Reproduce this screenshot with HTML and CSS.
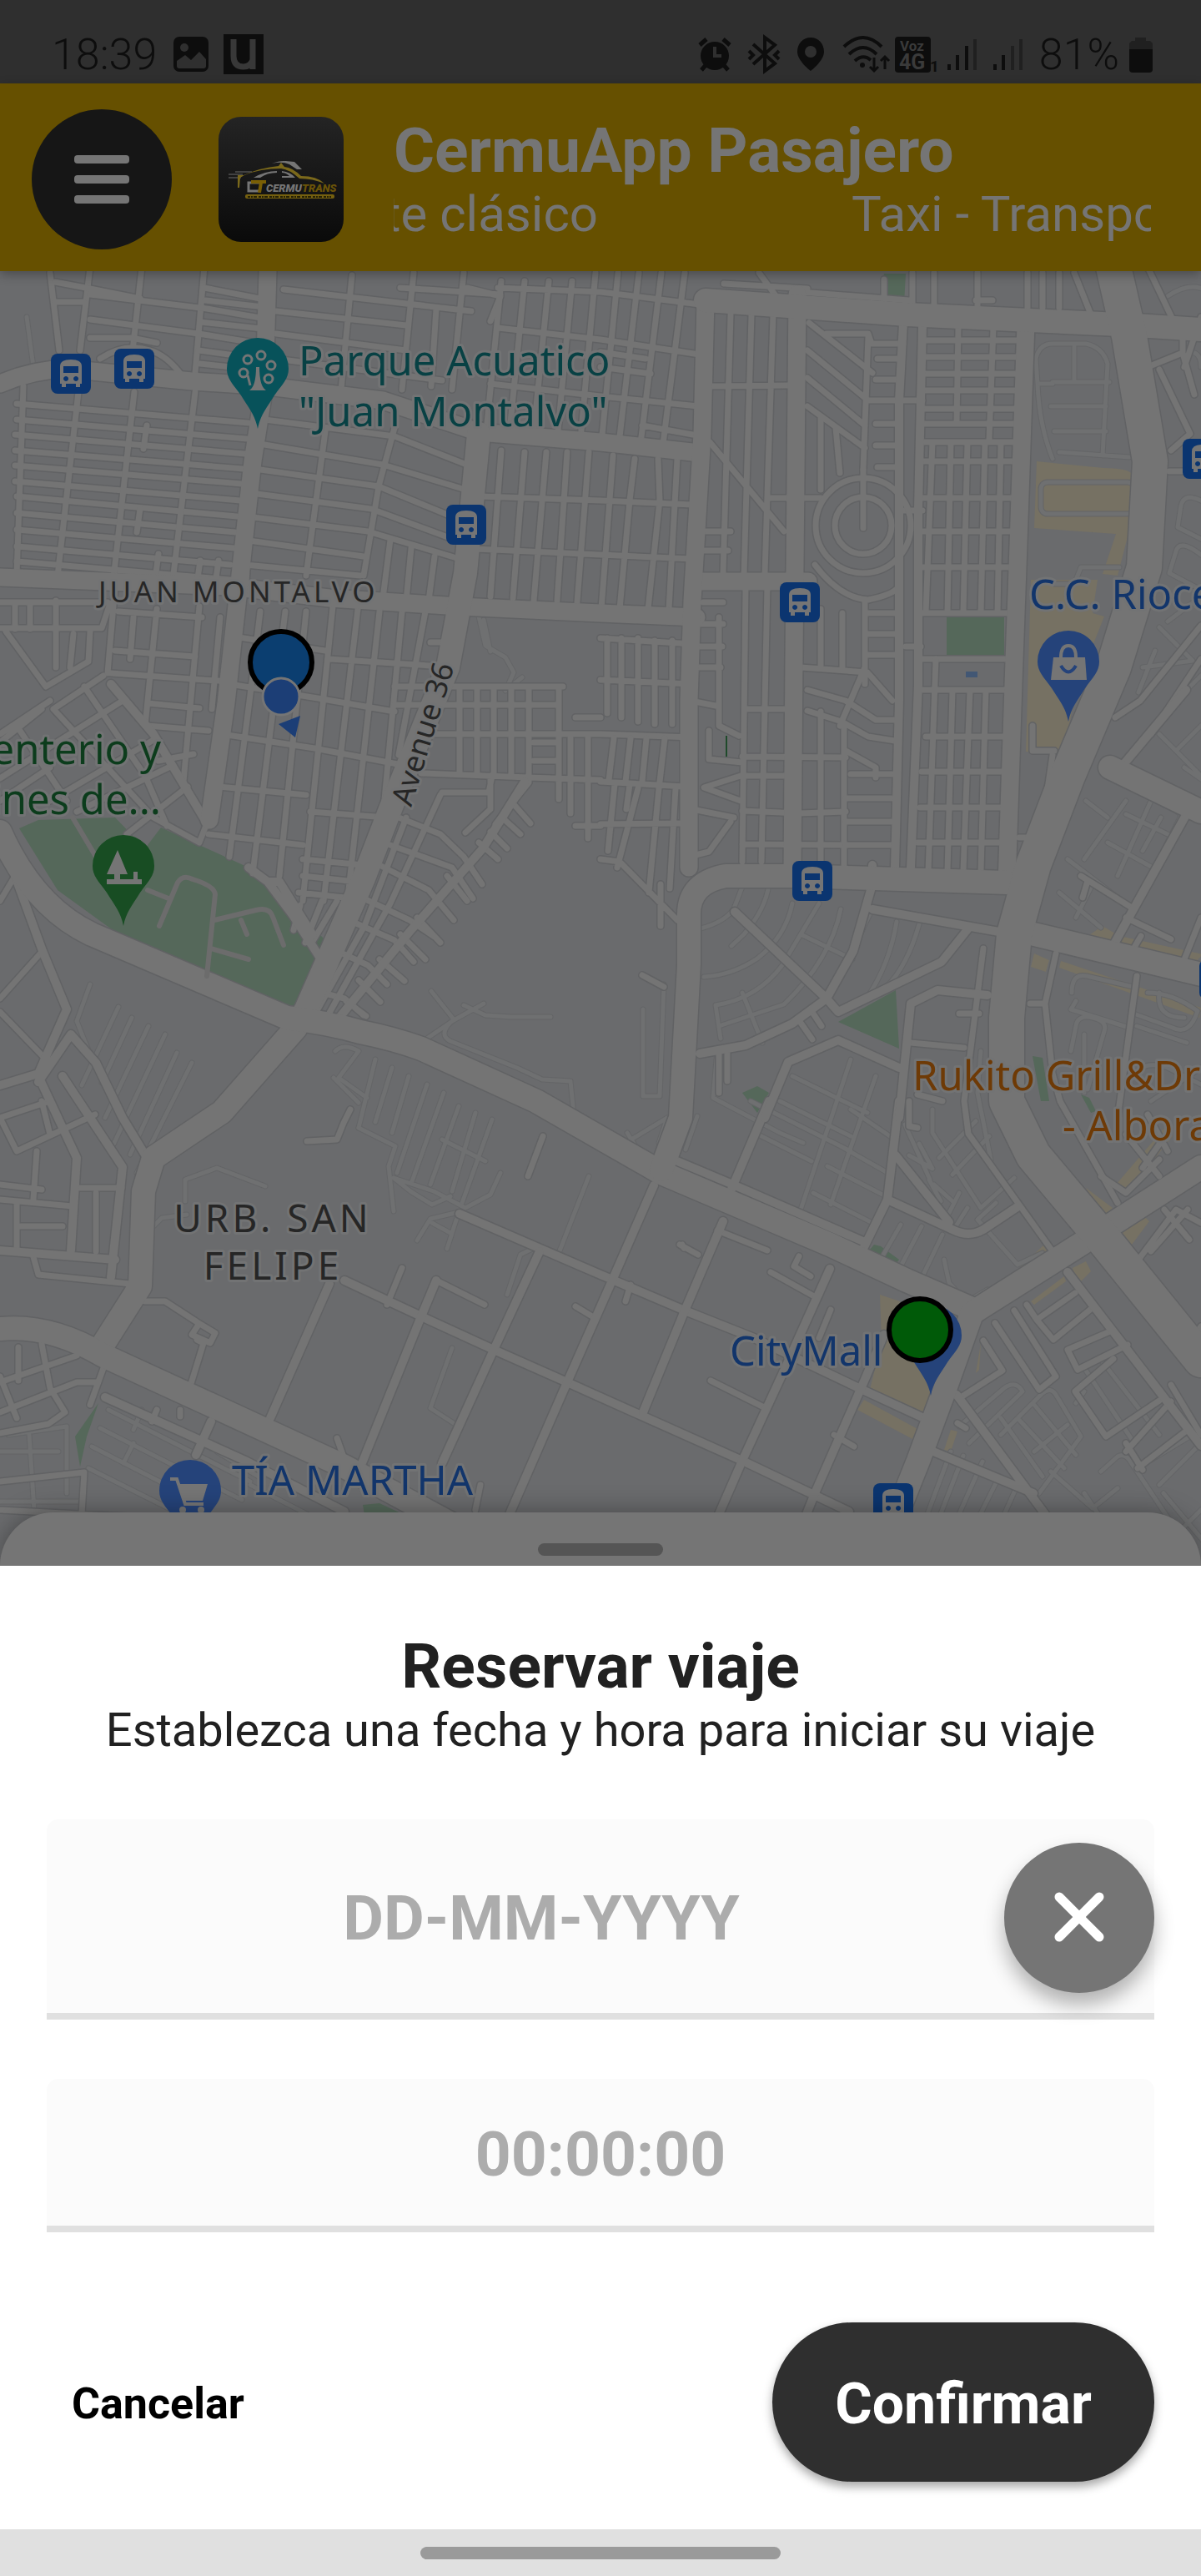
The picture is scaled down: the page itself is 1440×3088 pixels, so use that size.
FILE: index.html
```html
<!DOCTYPE html>
<html lang="es">
<head>
  <meta charset="UTF-8">
  <meta name="viewport" content="width=device-width, initial-scale=1.0">
  <title>CermuApp Pasajero</title>
  <link rel="stylesheet" href="styles.css">
</head>
<body>

<div class="status-bar">
  <div class="status-group">
    <span class="status-text">18:39</span>
    <svg class="status-picture" viewBox="0 0 42 42"><rect width="42" height="42" rx="7" fill="#0d0d0d"/><circle cx="13" cy="13" r="5" fill="#2f2f2f"/><path d="M4 29l10-7 7 6 10-10 8 9v8a3 3 0 0 1-3 3H7a3 3 0 0 1-3-3z" fill="#2f2f2f"/></svg>
    <svg class="status-u" viewBox="0 0 48 48"><rect width="48" height="48" fill="#0d0d0d"/><path d="M12 6v20q0 13 12 13 8 0 11-8M35 6v36" fill="none" stroke="#383838" stroke-width="7"/></svg>
  </div>
  <div class="status-group">
    <svg class="status-icons" viewBox="830 38 400 52">
      <g fill="#0d0d0d">
        <circle cx="853" cy="66" r="17"/>
        <path d="M844 75l-7 8M862 75l7 8M835 53l8-7M871 53l-8-7" stroke="#0d0d0d" stroke-width="5"/>
        <path d="M853 55v11h8" fill="none" stroke="#2f2f2f" stroke-width="4"/>
        <path d="M899 52l26 23-12 9V44l12 9-26 23M894 60l5 5-5 5M930 60l-5 5 5 5" fill="none" stroke="#0d0d0d" stroke-width="4"/>
        <path fill-rule="evenodd" d="M968 44c-9 0-16 7-16 17 0 11 16 23 16 23s16-12 16-23c0-10-7-17-16-17zm0 10a7 7 0 1 1 0 14 7 7 0 0 1 0-14z"/>
        <path d="M1008 55q23-22 45 0M1014 64q17-16 33 0M1021 72q10-9 19-1" fill="none" stroke="#0d0d0d" stroke-width="4"/>
        <circle cx="1030" cy="77" r="3"/>
        <path d="M1044 68v16m-5-5l5 5 5-5M1057 82V67m-5 5l5-5 5 5" fill="none" stroke="#0d0d0d" stroke-width="3"/>
        <rect x="1069" y="43" width="43" height="43" rx="4"/>
        <rect x="1132" y="76" width="4" height="7"/><rect x="1142" y="65" width="4" height="18"/><rect x="1153" y="54" width="4" height="29"/>
        <rect x="1187" y="76" width="4" height="7"/><rect x="1197" y="65" width="4" height="18"/>
      </g>
      <g fill="#202020"><rect x="1163" y="46" width="4" height="37"/><rect x="1208" y="54" width="4" height="29"/><rect x="1218" y="46" width="4" height="37"/></g>
      <text x="1075" y="60" class="volte volte-voz">Voz</text>
      <text x="1074" y="82" class="volte volte-net">4G</text>
      <text x="1111" y="85" class="volte volte-sim">1</text>
    </svg>
    <span class="status-text">81%</span>
    <svg class="status-battery" viewBox="0 0 28 43"><path d="M7 5V1h13v4h5l3 3v10H0V8l3-3z" fill="#202020"/><path d="M0 15h28v24a4 4 0 0 1-4 4H4a4 4 0 0 1-4-4z" fill="#0d0d0d"/></svg>
  </div>
</div>

<header class="app-header">
  <button class="menu-button" aria-label="Menú"><span></span><span></span><span></span></button>
  <svg class="app-logo" viewBox="0 0 150 150">
    <defs><linearGradient id="tile" x1="0" y1="0" x2="0" y2="1"><stop offset="0" stop-color="#242424"/><stop offset="1" stop-color="#0a0a0a"/></linearGradient></defs>
    <rect width="150" height="150" rx="27" fill="url(#tile)"/>
    <path d="M12 69h17M12 73h15M20 66h20" stroke="#6d6d6d" stroke-width="1"/>
    <path d="M23 85V70h7q20-9 42-11l3-4 4 5q10 1 20 11 19 0 28 9-14-6-30-6-12-11-22-12-25 0-44 8l-5 3-1 12z" fill="#7a681b"/>
    <path d="M64 56q18-7 28 2l8 5h-6l-9-6q-9-4-21-1zM80 53l11 1 9 9h-6zM42 73q14-8 28-8v2q-12 0-20 6zM76 65q10 1 16 8H76v-2h9q-4-4-9-4z" fill="#757575"/>
    <path d="M49 79H36v10h14" fill="none" stroke="#757575" stroke-width="3"/>
    <path d="M39 78h18M51 79l-2 12" stroke="#7a5f05" stroke-width="4"/>
    <text x="57" y="90" class="logo-name">CERMU<tspan class="logo-name-end">TRANS</tspan></text>
    <rect x="32" y="93" width="107" height="5" rx="2" fill="#75600f"/>
    <path d="M35 96h100" stroke="#242006" stroke-width="2" stroke-dasharray="3 1 2 1 4 2"/>
  </svg>
  <div class="app-heading">
    <h1>CermuApp Pasajero</h1>
    <div class="marquee"><span>Taxi - Transporte clásico</span><span>Taxi - Transporte clásico</span></div>
  </div>
</header>

<main class="map">
  <svg class="map-canvas" viewBox="0 325 1440 1552" preserveAspectRatio="xMidYMin slice">
    <defs>
      <g id="bus">
        <rect width="48" height="48" rx="8" fill="#0b3570"/>
        <path fill="#757575" fill-rule="evenodd" d="M11 15q0-8 13-8t13 8v21h-2v4h-5v-4H18v4h-5v-4h-2zm4 0v8h18v-8zm3 12a3 3 0 1 0 .1 0zm12 0a3 3 0 1 0 .1 0z"/>
      </g>
      <path id="pin" d="M0 72C-3 56-10 48-20 32-30 18-37 12-37 0A37 37 0 0 1 37 0C37 12 30 18 20 32 10 48 3 56 0 72z"/>

      <!-- thin alleys and parking lanes -->
      <g id="lanes">
        <path d="M32 380l8 60M1262 550q-16-40-18-90l-2-30q4-18 20-18h40q20 4 26 24l-6 110M1288 416v42M1262 458h68M1260 487h66M1264 517h62M1270 542l84 6"/>
        <rect x="1248" y="578" width="112" height="38" rx="8"/>
        <path d="M1264 700h24l8-20h46M1262 460h-16"/>
        <path d="M572 730l10 44 24 14 10 18-10 22 20-16M580 743l8 38"/>
        <path d="M108 1180l-16 44 20 50M142 1207l-44 94M158 1220l-36 78M178 1230l-52 110M198 1240l-62 132M212 1262l-56 122M230 1274l-66 132"/>
        <path d="M517 1188l27 34M580 1203l-36 20-50 34M544 1222q-20 18-4 26l80 32 30 14 34 2 6 60M582 1217l-26-12M582 1217l30 2h48"/>
        <path d="M400 1292l30 30M402 1260q10-10 28 0l-24 32 34 24M450 1270l-20 82M470 1280l-20 65M490 1290l-20 68M512 1300l-36 106M532 1310l-38 106M550 1326l-34 94M570 1334l-28 94M590 1342l-36 100"/>
        <path d="M430 1352l44 22-8 24 6 54M472 1412l48 16 38 20 30-16 12-26M472 1412l20 16 26 16 22-10M530 1366l52 26"/>
        <path d="M222 1440v-26l38-14 58 22M184 1470l10-10 30-4M500 1487l16-26 34-8-14 44M518 1466l22 12M706 1410l-36 92M640 1496l-16 8-16 48M542 1616l-26 72 34 22"/>
        <path d="M860 1260l-5 56 80 42 28 12M900 1320l120 60M1020 1270l-60 180M1050 1290l-54 154M950 1290l90 44M935 1320l85 42M905 1358l68 34M1020 1330l50 34M1008 1374l60 34M992 1398l70 36M975 1430l75 38M822 1378l14-40M750 1370l50-30-10 30M752 1358l10 16"/>
        <path d="M1080 1468l-22 38M1105 1470l-24 46M1130 1480l-22 46M1132 1510l6 28 36 40M1160 1560l24-14M1170 1566l24-14M1085 1348l30 66M1090 1385l28 16-16-30M1120 1420l22 20M1128 1440l-14-26M1138 1454l12-24M1146 1470l14-22M1194 1442l-22 20 48 54 30-14M1118 1330v28l58 90 40-36M1126 1388l44-44M1142 1408l44-46"/>
        <path d="M922 1060q-4 30-30 60l-15 14M950 1083q-8 40-42 66-30 20-64 22M982 1083l-44 74q-30 40-80 48l6 40M1008 1090q-12 60-68 114l-78 26M1046 1090q-16 30-26 60M960 1120l62 30M1075 1105q-8 50-36 92M1102 1108q-14 50-40 76M890 1190l24 60"/>
        <path d="M840 1113q30-8 40-24l10-26M796 1180l-5 134h-20v-104M1188 1390l-16-80 4-50"/>
        <path d="M1390 880l60 60M1360 930l60 50M1350 960l-50 70M1380 960l-40 90M1400 1000l-50-24M1328 1010l54 30M1300 1050l60 40M1280 1030l60 46M1270 1070l50 42M1410 900l30-30M1420 920l20 14M1370 1020l22-40M1302 960l26 20M1290 1100l18-36M1420 970l-60 120"/>
        <path d="M1285 1190q0-24 18-20l60 14M1290 1200l-6 10 70 22M1284 1260l6-30q2-14 20-10 18 4 14 16l-20 70M1376 1190q30 0 60 22-10 30-30 20l-44-16M1363 1230l60 20M1360 1290q10-20 40-10l40 20M1390 1190q-4 30 30 30M1300 1240v70M1380 1320l60-40"/>
        <path d="M1150 1710l54-46q14-10 22 4l-64 62M1200 1720l50-50q10-8 16 2l30 50-50 68M1220 1700l56 60M1240 1684l50 60M1200 1700l50 70M1240 1740l40-32M1260 1764l50 44 30-24M1320 1764l20-18q8-4 14 4l60 90M1390 1780l50-50M1380 1750l60-36M1395 1790l50 60M1300 1640l60 90M1320 1630l70 90M1300 1668l-10 14"/>
        <path d="M1140 1740l-30 80M1155 1745l-35 90M1178 1752l-40 90M1198 1770l-40 80M1220 1780l-36 80M1420 1830l20-20M1300 1790l40 60"/>
        <path d="M130 1690l170 86M120 1712l170 86M110 1734l140 72M106 1760l100 50M170 1690l-10 24M160 1730l-12 24M260 1740l50 30M10 1720l70-10v80M0 1740h70M35 1720l6 90M0 1800h100M320 1764l80 44M300 1780l70 36"/>
        <path d="M1404 430q36-20 36 10M1400 355q30-20 50-4M1440 600q-20-10-24 6l-4 26 28 14M1440 665q-26-20-30-4l-8 26 38 20M1390 752l40 40-60 8M1400 745l40-30M1385 780l-20 50M1420 830l20-20"/>
      </g>

      <!-- city streets -->
      <g id="streets">
        <path d="M20 484l278 23M20 503l276 23M18 521l276 23M18 540l274 22M18 558l272 22M18 577l270 23M20 595l264 24M20 615l262 23M20 635l260 22M20 655l256 22M20 673l256 22"/>
        <path d="M28 463l-8 227M94 470l-26 230M161 470l-26 233M234 470l-27 227M60 327l11 93M108 320l-12 100M170 320l-12 110M245 320l-11 127M176 510l-4 28M168 610l-4 28M190 664l-4 30M240 672l-4 28M262 672l-4 28"/>
        <path d="M66 362h34M108 353l140 17 70 12M108 383l130 17 74 12M108 405h50l30 6M66 338l42 8 60 12M245 345l72 14M246 360l70 8M240 386l74 8M238 420l74 10M240 436l74 8M120 430q30-20 60-10 20 6 38 30"/>
        <path d="M317 503l156 20 89 35M317 533l142 24 99 30M312 563l142 20 97 40M308 592l137 18 92 34M303 620l138 17 110 33M298 648l138 19M294 677l138 13M390 517l-23 173M473 513l-19 70-18 107M468 647l-9 70M493 657l-6 63M521 667l-7 53M303 560l-8 140M312 520l-22 180"/>
        <path d="M340 347l225 26M331 373l156 17M331 400l156 20M422 330l-13 137M496 327l-14 140M523 370l-6 93M556 327l-14 140M560 345l40 10-12 30M480 345l120 8M330 430l200 26"/>
        <path d="M601 337l-18 180M629 337l-18 180M658 337l-18 180M686 337l-18 190M714 327l-18 200M741 327l-20 205M766 327l-24 205M793 327l-25 205M821 327l-26 205M597 345l123 5 119 15M597 393l123 14 119 18M588 460l132 15 117 12M720 440l60 8M720 422l54 8M770 510l66 12"/>
        <path d="M601 540l-13 175M629 542l-14 175M655 542l-15 178M680 542l-12 178M706 542l-14 180M735 546l-14 184M761 550l-6 50-12 130M789 550l2 50-14 130M812 550l-10 180M575 595l145 5 110 5M570 658l150 7 110 5"/>
        <path d="M312 733l-12 100-25 194M342 733l-39 314M367 733l-32 317M399 727l-36 353M429 730l-41 350M455 733l-37 334M482 733l-23 247M510 733l-32 172M280 763l110 17M395 790l151 10M275 820l106 17 92 16M266 880l111 17 105 20M262 943l105 10M372 973l92 7M250 1000l113 13M363 1030l73 7M363 1050l64 7M358 1070l65 7M516 770h32"/>
        <path d="M138 703l-9 104M188 730l-14 140M239 727l-19 210M264 740l-10 110M142 733l100 7M138 780l96 7M133 807l142 10M177 843l62 6M177 870l73 6M160 740l-4 50M0 722h129M0 753h122l10-30M7 757l48 66 51-30 2-36M67 720v80M18 724v30M36 724v30M88 760l-4 40"/>
        <path d="M64 850l120 130 55 30 9-23M101 823l73 107 26 60M0 933l147-93M60 960l124-73M92 973l110-53M152 1000l73-57M0 880l60-40M20 870l60 90M50 850l-50 40M64 850l60-40M0 960l60-40M190 912l42-8"/>
        <path d="M478 980l50 20 28 27 22 33M468 1013l74 27 25 37M455 1037l59 30 30 36M436 1077l55 26 30 20M418 1103l55 24 23 26M404 1140l37 17 23 23M386 1190l27 7 23 20M615 963l21 24M602 980l22 20M588 997l20 20M574 1010l23 20M536 1050l24 30M500 1100l28 30M480 1120l30 30M455 1150l30 26M430 1175l26 26M415 1200l24 18"/>
        <path d="M487 980l-50 130-60 107M528 953l-60 130-78 140M360 1085l-8 30M386 1080l-20 50M404 1080l-30 50M412 1090l-50 130"/>
        <path d="M473 823h202M473 845h197M514 880h206l110 4M505 927l129 5 86 3M551 823v105M572 823v106M592 823v107M613 823v108M634 823v115l-40 50M670 823v135M640 890h30M640 912h30M684 885v90M705 885v120M530 950h56l4-20M588 930v40l-30 28M690 860h30M690 990h30"/>
        <path d="M720 765l110 7M720 815l108 5M728 765v90M745 765v95M765 765v100M785 768v100M806 768v100M736 885l-6 50M756 885l-6 52M775 885l-5 52M797 885l-6 52M720 937l102 6M737 940l-8 80M755 940l-4 30M765 945l-25 95M790 945l-12 125M810 945l-7 120M720 988l102-1M720 1030l23 3 69 70M792 1060v50"/>
        <path d="M876 377l-9 310M901 377l-9 313M927 377l-10 310M894 703l-4 330M862 740v130l24 12M920 703l-7 330M851 530l89 107M853 463l92-1M846 637h30M843 660h30M843 722h24M832 748h35M832 775h34M838 800h26M894 850h50M890 907l124 1M890 930h50M890 972l69 3 55-2M890 1012l124 1M920 597h35M828 840l30 6M830 970l50 10M850 876v34l40 4M888 930l-44 14 44 16M876 985l-26 36-16 4"/>
        <path d="M1041 403l-6 160M970 387l76 60M968 420l73 60M968 453l69 57M968 487l69 50M991 400h50l4 12h38M984 500v87M1002 513l5 54M1052 430h28M1050 455h28M1041 480h65M1050 508h26M1050 534h26M1052 560h24M958 597h26M1083 612h23M1086 775h18M868 340l100 6M910 327l22 30M960 350l130 10M1094 327v40M1120 327v40M1172 327v42M1190 360h-20M1232 327v42M1250 327v42M1270 327v42M1288 327l20 50M1060 335v30"/>
        <circle cx="1035" cy="630" r="57"/><circle cx="1035" cy="630" r="34"/><path d="M1035 563v70"/>
        <path d="M977 677q30 40 64 42 30-6 37-16M1037 720v100M984 730v70M1010 735v65M1041 735h37M1041 760h37M1041 785h37M960 800l80 6 30 34M1037 800l-30 70M968 827l46 13 36 23h28M968 852l41 13 32 18 32 5M1014 900l36 20v12M984 853v180M1012 870v170"/>
        <path d="M1149 393l-2 114M1191 393l-5 134M1106 408h118M1106 428h118M1106 448h118M1106 468h118M1106 490h118M1106 508h118M1106 530h118M1106 553h118M1106 597h116M1106 637h116M1106 680h116M1106 735h116M1106 790h116M1118 530l-8 205M1140 530l-4 205M1160 530l-5 205M1181 530l-5 205M1200 530l-4 205"/>
        <path d="M1105 827h102M1110 883h98M1105 925h98M1103 968h98M1100 1010h105M1122 790l-9 255M1142 827l-6 218M1163 827l-8 218M1182 827l-6 218M1020 928h50M1014 957h55M1014 985h55M1014 1013h55"/>
        <path d="M1376 320l32 67M1376 440l42-17 14 50M1390 443l37 77-23 20M1418 390v34M1440 380l-20 60M1402 565h20M1440 750l-73 90-30 20M1440 790l-60 90M1238 870v30h26M1262 905l-16 110M1222 1004h24"/>
        <path d="M796 1183l-26-14M1179 1137l-23 183 5 39 101 141M1092 1250l64 6M1150 1215h24M1266 1143l-13 60 9 84 9 33 69 122M1235 1203h18M1363 1170l-23 170M1296 1050l64 40M1304 1056l-6 20M1350 1100l54 26M1440 1100l-20 50M1368 1122l-14 24"/>
        <path d="M960 1226l14 20M975 1215l10 15M862 1260v50M872 1260v36"/>
        <path d="M0 1213l55 57M51 1140L0 1197M18 1050L0 1080M0 1420l50 6M39 1503l7 25 110 11M0 1438l87 8M96 1424h50M20 1440v60M44 1380l-4 58M0 1340l60-20M0 1340l20 40 94-44M50 1320l10 40M115 1430v70M25 1470h50M22 1615v40M50 1611l10 53 18 29-20 14-58 11M0 1657l92-32M0 1693l92-36h24M124 1640l-16 44M0 1650l20 50M0 1776l101-11-3 50M0 1810l190 10M174 1560h24l40 26 20 12-6 12-22-10 8-12M236 1606l8 4-16 52M188 1690l-6 14M216 1690v8M404 1724l12 34M576 1780l-6 30"/>
        <path d="M420 1330l-8 16-8 20-36 2M651 1362l-18 48M523 1535l58 29M482 1520l-18 44M690 1566l20 12M820 1496l-2-4M815 1492l22 12M860 1475l60 24M958 1506l-6 12 20 12M924 1525l54 30M750 1560l6-20M852 1655l64 32M1000 1720l24 14M996 1570l-14 34M1148 1706l10 6"/>
        <path d="M1216 1571l50 79-20 16-53-80M1289 1550l-46 32 20 24 44-36M1243 1582l-12-18M1179 1607l23 36-50 32M1331 1596l-51 22 12 24 60-30M1335 1629l-46 39 37 54 64-43M1350 1740l54-60M1364 1760l60-46M1350 1730l20 32M1420 1620l20-30M1404 1660l36 60M1350 1530l60-80 30 16M1380 1500l44-50M1396 1450l30 36M1320 1410l30 20 40-40M1350 1360l40 50M1370 1400l24-34M1400 1380l-24-44"/>
        <path d="M1130 1320l-30-8M1090 1320v30l10 2"/>
      </g>

      <!-- secondary roads -->
      <g id="roads">
        <path d="M1083 387l-5 93v360l-5 200M1106 390l-5 220v210l-9 220"/>
        <path d="M133 820l51 60 64 107M321 1057l30 40 32 50M298 1040l23 17h14l40 64"/>
        <path d="M629 937l-50 80-88 100-90 110"/>
        <path d="M18 1050l33 90 29 70-34 77-46 14M46 1297l39-57 30 34 32 66 28 46M46 1290l46 98-7 111M75 1290l72 109-14 132M0 1499l138 11"/>
        <path d="M413 1535l92 43 87 40 88 39 40 18 170 76 128 61M551 1455l169 73 101 43 83 33 128 61 78 36"/>
        <path d="M395 1539l-71 161M523 1535l-18 43-71 176M647 1500l-55 118-62 136M784 1421l-50 114-54 122-69 158M867 1464l-46 107-50 122M995 1521l-55 122-50 108-28 64M1060 1600l-28 65-55 125-10 25"/>
        <path d="M812 1392l69 29 156 68M922 1320l-46 108M1078 1320l-14 118-32 65M1064 1438l78 36q20 10 37 0l42-28M1074 1385l64 80"/>
        <path d="M839 1263l55-10 56-26 41-30 32-57 23-80v-23M1046 1090l152 27M1161 1113l-32 40-124 60-14-16-110-104M917 1340l28-67 60-26 73 33M1078 1340l14-137 32-16 60 6"/>
        <path d="M1147 1672l106 143M1280 1525l160 208M1119 1740l120 50M1422 977l-87 156M1422 827l-78 93M126 1675l168 76 119 61M253 1704l-18 40"/>
      </g>

      <!-- avenues -->
      <g id="avenues">
        <path d="M0 460q40-17 80-18l150 15 91 6 138 17 115 38 146 12 119 13"/>
        <path d="M0 692l275 11 120 14 156 10 169 8 115 5M839 697h130"/>
        <path d="M846 360l-4 160-12 200-4 120v200M317 463l-14 90-32 290-20 140M956 353l-4 434-2 260"/>
        <path d="M1230 387l-9 266-6 167-8 240M321 325l-4 140"/>
      </g>
      <g id="highways">
        <path d="M574 520l-16 167-21 113-69 170-32 83-69 157-13 23-88 100-82 55-12 40-4 114-44 69"/>
        <path d="M0 997q40 90 110 123l234 100q50 6 88 17 40 8 73 20l138 63 150 86 202 86 92 43 83 36"/>
        <path d="M0 1593q60-6 124 32l133 61 156 72 130 70M1170 1571l147-93 123-79M1165 1575l-32 90-32 86-24 60"/>
        <path d="M846 360l241 17 276 13 77 5M950 1050l257 8M950 1050H870q-44 8-44 46v60l-10 184-23 62M1240 1120l200 48M1331 920l109 53"/>
      </g>
      <path id="motorway" d="M1335 320l19 83 25 150-7 127-37 120-55 130-41 107-23 83-9 100v100l32 65 78 93 123 152"/>
    </defs>

    <rect y="325" width="1440" height="1552" fill="#6a6b6d"/>

    <g fill="#55685a">
      <path d="M23 993l23-10 92-3 36 37 19-25 46 21 59 27 23 17 69 70-36 86-216-96-69-50z"/>
      <path d="M1060 328h26l-2 36-30-2zM1135 738h69v47h-69zM1074 1187l-69 38 73 32zM890 1310l18-8 14 8-14 24zM1048 1492l8 2 22 16-6 8-34-14zM1238 1266l12 2 8 52h-10zM1296 1312l10 4 8 16-6 2zM118 1682l-14 40-8 36-6-36zM435 1804l20-2 30 14h-48z"/>
    </g>
    <g fill="#767163">
      <path d="M1243 553l80 8q34 0 36 10l-1 49-18 70-18-2 16-48-98-7zM1236 695h80l-6 40 14 4-34 86-14 78-46-2z"/>
      <path d="M1252 1108l48 17 22-15 20 12 100 22-14 16-176-50zM1240 1143l18 8-4 14-18-6zM1272 1152l168 56-2 12-168-60z"/>
      <path d="M1055 1552l24 8-4 40 50 20-14 86-70-32 16-66zM1036 1678l66 36-6 12-68-36zM1078 1520l64 26-4 8-60-26zM1310 1430l24 18-12 12-20-36zM1338 1420l60-70 8 12-56 70zM1338 1484l34-26 6 6-24 32-12-4zM1212 1530l40-38 6 12-44 28zM1270 1500l10-12 8 6-10 14zM1176 1610l-6 36 4-4zM1286 1520l16-8 6 12-16 16zM1236 1560l40-30 2 6-38 28zM1140 1714l8 2-8 24-8-2z"/>
    </g>
    <rect x="1158" y="805" width="14" height="7" fill="#425774"/>
    <path d="M871 882v26" stroke="#1f4a2b" stroke-width="2"/>

    <g class="roads lane-lines"><use href="#lanes" class="casing"/><use href="#lanes" class="fill"/></g>
    <g class="roads">
      <use href="#streets" class="casing street-casing"/>
      <use href="#roads" class="casing road-casing"/>
      <use href="#avenues" class="casing avenue-casing"/>
      <use href="#highways" class="casing highway-casing"/>
      <use href="#motorway" class="casing motorway-casing"/>
      <use href="#streets" class="fill street"/>
      <use href="#roads" class="fill road"/>
      <use href="#avenues" class="fill avenue"/>
      <use href="#highways" class="fill highway"/>
      <use href="#motorway" class="fill motorway"/>
    </g>
    <g class="park-path">
      <path d="M87 980l28 47M177 1067l25 10M191 1110l22-52q6-10 18-4 26 8 27 18l-10 98M257 1103l50-12q16-4 20 8l13 34M289 1103l7 17M253 1137l45 13"/>
    </g>

    <use href="#bus" x="61" y="424"/><use href="#bus" x="137" y="418"/><use href="#bus" x="535" y="605"/>
    <use href="#bus" x="935" y="698"/><use href="#bus" x="1418" y="526"/><use href="#bus" x="950" y="1032"/>
    <use href="#bus" x="1438" y="1150"/><use href="#bus" x="1047" y="1778"/>

    <g transform="translate(309 442)">
      <use href="#pin" fill="#07525a"/>
      <path d="M-10 26q8-5 8-28h4q0 23 8 28z" fill="#757575"/>
      <g fill="none" stroke="#757575" stroke-width="3"><circle cx="-17" cy="5" r="5"/><circle cx="-12" cy="-11" r="5"/><circle cx="4" cy="-16" r="5"/><circle cx="16" cy="-4" r="5"/><circle cx="13" cy="12" r="5"/><path d="M-12 8l3 12"/></g>
    </g>
    <g transform="translate(148 1038)">
      <use href="#pin" fill="#184d23"/>
      <path d="M-7-19L-20 10h9v6h-9v6h42v-6h-5V7h-5v9H-4v-6h9z" fill="#757575"/>
    </g>
    <g transform="translate(1281 793)">
      <use href="#pin" fill="#25437a"/>
      <path d="M-18-5h38l2 27h-43z" fill="#757575"/>
      <path d="M-9-5q0-14 9-14t9 14" fill="none" stroke="#757575" stroke-width="4"/>
      <path d="M-9 5q9 15 18 0" fill="none" stroke="#25437a" stroke-width="4"/>
    </g>
    <use href="#pin" x="1116" y="1601" fill="#25437a"/>
    <g transform="translate(228 1787)">
      <use href="#pin" fill="#25437a"/>
      <path d="M-24-14h8l10 30h22" fill="none" stroke="#757575" stroke-width="4"/>
      <path d="M-14-8h35l-6 20H-8z" fill="#757575"/><circle cx="-9" cy="23" r="4" fill="#757575"/><circle cx="13" cy="23" r="4" fill="#757575"/>
    </g>

    <!-- trip origin, current position, destination -->
    <circle cx="337" cy="794" r="37" fill="#0b3e70" stroke="#000" stroke-width="6"/>
    <circle cx="337" cy="835" r="22" fill="#1c3e76" stroke="#757575" stroke-width="3"/>
    <path d="M334 868l26-10-6 26z" fill="#1c3e76"/>
    <circle cx="1103" cy="1594" r="37" fill="#005a08" stroke="#000" stroke-width="6"/>

    <g class="label">
      <text x="358" y="450" fill="#084144">Parque Acuatico</text>
      <text x="358" y="511" fill="#084144">"Juan Montalvo"</text>
      <text x="193" y="916" class="end" fill="#0c3c1c">Cementerio y</text>
      <text x="193" y="976" class="end" fill="#0c3c1c">Jardines de...</text>
      <text x="1234" y="730" fill="#12356b">C.C. Riocentro</text>
      <text x="1094" y="1307" fill="#6e3a06">Rukito Grill&amp;Drinks</text>
      <text x="1274" y="1367" fill="#6e3a06">- Alborada</text>
      <text x="875" y="1637" fill="#12356b">CityMall</text>
      <text x="278" y="1792" fill="#12356b">TÍA MARTHA</text>
      <text x="118" y="722" class="district small">JUAN MONTALVO</text>
      <text x="327" y="1477" class="district middle">URB. SAN</text>
      <text x="327" y="1534" class="district middle">FELIPE</text>
      <text class="street-name" transform="translate(493 968) rotate(-73)">Avenue 36</text>
    </g>
  </svg>
  <div class="trip-sheet"><span class="sheet-handle"></span></div>
</main>

<form class="booking">
  <h2>Reservar viaje</h2>
  <p>Establezca una fecha y hora para iniciar su viaje</p>
  <div class="field date-field">
    <input type="text" placeholder="DD-MM-YYYY" aria-label="Fecha">
    <button type="button" class="clear-button" aria-label="Borrar fecha">
      <svg viewBox="0 0 60 60"><path d="M6 6l48 48M54 6L6 54" fill="none" stroke="#fff" stroke-width="11" stroke-linecap="round"/></svg>
    </button>
  </div>
  <div class="field time-field">
    <input type="text" placeholder="00:00:00" aria-label="Hora">
  </div>
  <div class="actions">
    <button type="button" class="cancel-button">Cancelar</button>
    <button type="button" class="confirm-button">Confirmar</button>
  </div>
</form>

<div class="gesture-bar"><span></span></div>

</body>
</html>
```
FILE: styles.css
```css
* {
  box-sizing: border-box;
}
body {
  margin: 0;
  min-height: 100vh;
  display: flex;
  flex-direction: column;
  font-family: Roboto, sans-serif;
  background-color: #fff;
  color: #212121;
}
button {
  border: none;
  padding: 0;
  font-family: inherit;
  cursor: pointer;
}
.status-bar {
  height: 100px;
  padding: 30px 58px 0 62px;
  display: flex;
  justify-content: space-between;
  background-color: #2f2f2f;
  color: #0d0d0d;
}
.status-group {
  height: 70px;
  display: flex;
  align-items: center;
}
.status-text {
  font-size: 52px;
  font-weight: 300;
}
.status-picture {
  width: 42px;
  height: 42px;
  margin: 0 18px 0 20px;
}
.status-u {
  width: 48px;
  height: 48px;
}
.status-icons {
  width: 400px;
  height: 52px;
  margin-right: 12px;
}
.status-battery {
  width: 28px;
  height: 43px;
  margin-left: 12px;
}
.volte {
  font-weight: 700;
  fill: #3a3a3a;
}
.volte-voz {
  font-size: 17px;
}
.volte-net {
  font-size: 25px;
}
.volte-sim {
  font-size: 19px;
  fill: #0d0d0d;
}
.app-header {
  height: 225px;
  padding: 4px 60px 0 38px;
  display: flex;
  align-items: center;
  background-color: #665000;
  color: #757575;
  position: relative;
  z-index: 1;
  box-shadow: 0 4px 12px rgba(0, 0, 0, 0.3);
}
.menu-button {
  width: 168px;
  height: 168px;
  flex: none;
  border-radius: 50%;
  background-color: #161616;
  display: flex;
  flex-direction: column;
  align-items: center;
  justify-content: center;
  gap: 14px;
}
.menu-button span {
  width: 66px;
  height: 10px;
  border-radius: 4px;
  background-color: #757575;
}
.app-logo {
  width: 150px;
  height: 150px;
  flex: none;
  margin: 0 60px 0 56px;
}
.logo-name {
  font-size: 13px;
  font-weight: 900;
  font-style: italic;
  fill: #757575;
}
.logo-name-end {
  fill: #6b5408;
}
.app-heading {
  flex: 1;
  min-width: 0;
}
.app-heading h1 {
  margin: 0;
  font-size: 75px;
  line-height: 84px;
  font-weight: 700;
}
.marquee {
  display: flex;
  gap: 304px;
  overflow: hidden;
  white-space: nowrap;
  font-size: 60px;
  line-height: 70px;
}
.marquee span:first-child {
  margin-left: -405px;
}
.map {
  flex: 1;
  min-height: 600px;
  position: relative;
  overflow: hidden;
}
.map-canvas {
  position: absolute;
  width: 100%;
  height: 100%;
}
.roads use,
.park-path {
  fill: none;
  stroke-linecap: round;
  stroke-linejoin: round;
}
.casing {
  stroke: #616264;
}
.fill {
  stroke: #747474;
}
.lane-lines .casing {
  stroke: #646567;
  stroke-width: 7px;
}
.lane-lines .fill {
  stroke: #6f7071;
  stroke-width: 5px;
}
.street-casing { stroke-width: 10px; }
.street { stroke-width: 7px; }
.road-casing { stroke-width: 13px; }
.road { stroke-width: 10px; }
.avenue-casing { stroke-width: 24px; }
.avenue { stroke-width: 21px; }
.highway-casing { stroke-width: 31px; }
.highway { stroke-width: 28px; }
.motorway-casing { stroke-width: 45px; }
.motorway { stroke-width: 42px; }
.park-path {
  stroke: #6c6c6c;
  stroke-width: 6px;
}
.label {
  font-family: "Noto Sans", sans-serif;
  font-size: 49px;
  paint-order: stroke;
  stroke: #727374;
  stroke-width: 6px;
  stroke-linejoin: round;
}
.label .end {
  text-anchor: end;
}
.label .middle {
  text-anchor: middle;
}
.district {
  fill: #262626;
  font-size: 46px;
  letter-spacing: 4px;
}
.district.small {
  font-size: 35px;
}
.street-name {
  fill: #262626;
  font-size: 36px;
}
.trip-sheet {
  position: absolute;
  left: 0;
  right: 0;
  bottom: 0;
  height: 64px;
  padding-top: 37px;
  border-radius: 64px 64px 0 0;
  background-color: #757575;
  box-shadow: 0 0 30px rgba(0, 0, 0, 0.35);
}
.sheet-handle {
  display: block;
  width: 150px;
  height: 15px;
  margin: 0 auto;
  border-radius: 8px;
  background-color: #555;
}
.booking {
  padding: 78px 56px 57px;
  text-align: center;
  background-color: #fff;
}
.booking h2 {
  margin: 0;
  font-size: 75px;
  line-height: 84px;
}
.booking p {
  margin: 0 0 72px;
  font-size: 56px;
  line-height: 70px;
}
.field {
  display: flex;
  align-items: center;
  padding-top: 4px;
  border-bottom: 8px solid #e0e0e0;
  border-radius: 14px 14px 0 0;
  background-color: #fbfbfb;
}
.field input {
  flex: 1;
  min-width: 0;
  border: none;
  outline: none;
  background: none;
  font-family: inherit;
  font-size: 75px;
  font-weight: 700;
  text-align: center;
  color: #212121;
}
.field input::placeholder {
  color: #acacac;
  opacity: 1;
}
.date-field {
  height: 240px;
  margin-bottom: 71px;
}
.date-field input {
  padding-left: 40px;
}
.time-field {
  height: 184px;
  margin-bottom: 108px;
}
.clear-button {
  width: 180px;
  height: 180px;
  border-radius: 50%;
  background-color: #757575;
  box-shadow: 0 14px 24px rgba(0, 0, 0, 0.3);
}
.clear-button svg {
  width: 60px;
  height: 60px;
}
.actions {
  display: flex;
  align-items: center;
  justify-content: space-between;
}
.cancel-button {
  padding: 34px 30px 30px;
  background: none;
  color: #000;
  font-size: 52px;
  font-weight: 700;
}
.confirm-button {
  width: 458px;
  height: 191px;
  padding-top: 4px;
  border-radius: 96px;
  background-color: #2f2f2f;
  color: #fff;
  font-size: 68px;
  font-weight: 700;
  box-shadow: 0 6px 12px rgba(0, 0, 0, 0.35);
}
.gesture-bar {
  height: 56px;
  display: flex;
  align-items: center;
  justify-content: center;
  background-color: #e0e0e0;
}
.gesture-bar span {
  width: 432px;
  height: 15px;
  border-radius: 8px;
  background-color: #9a9a9a;
}
```
